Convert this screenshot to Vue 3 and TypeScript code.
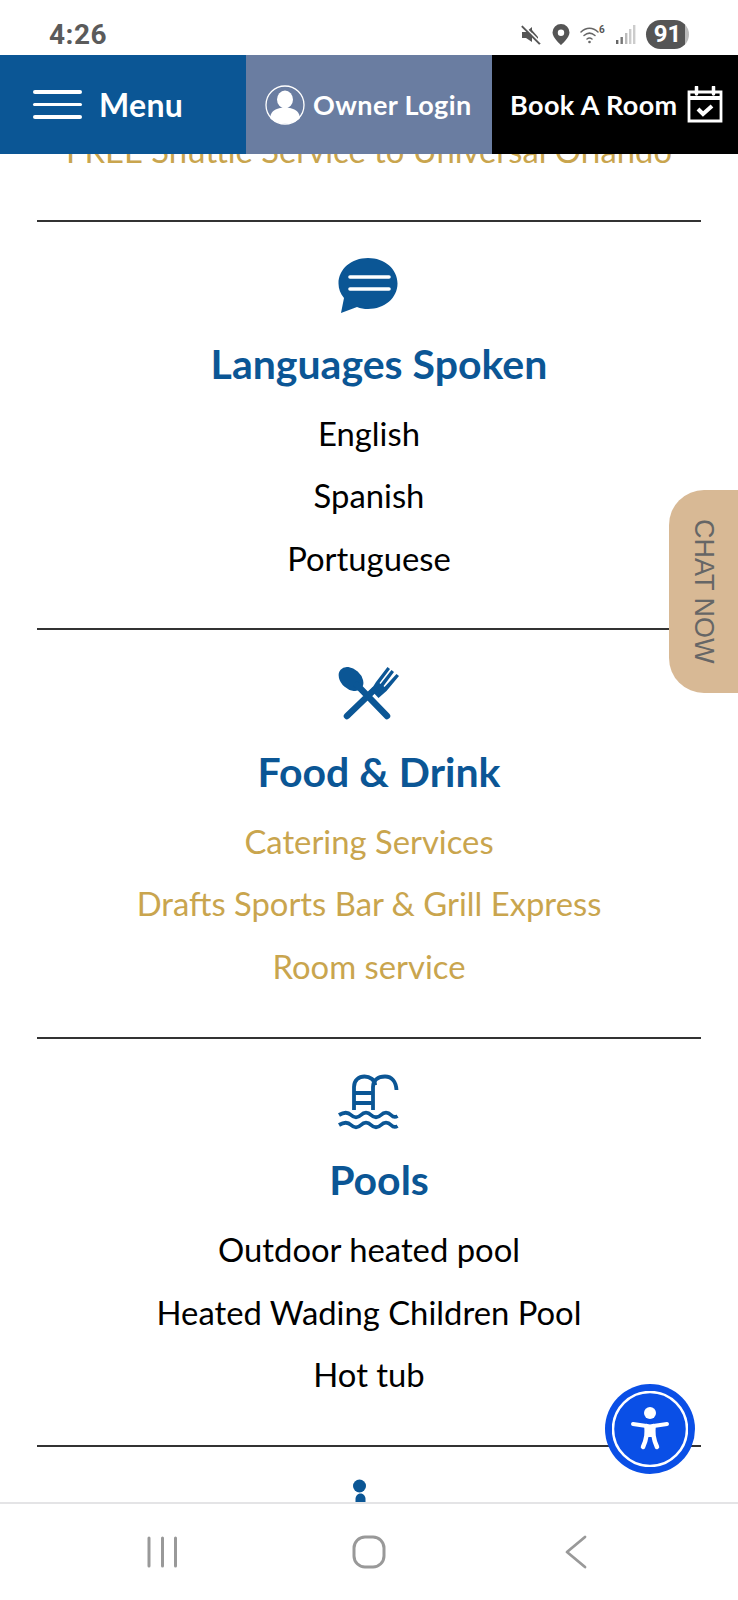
<script setup lang="ts">
interface Amenity {
  key: string
  title: string
  link: boolean
  items: string[]
}
const amenities: Amenity[] = [
  { key: 'lang', title: 'Languages Spoken', link: false, items: ['English', 'Spanish', 'Portuguese'] },
  { key: 'food', title: 'Food & Drink', link: true, items: ['Catering Services', 'Drafts Sports Bar & Grill Express', 'Room service'] },
  { key: 'pool', title: 'Pools', link: false, items: ['Outdoor heated pool', 'Heated Wading Children Pool', 'Hot tub'] },
]
</script>

<template>
  <div class="phone">
    <header class="status">
      <span class="time">4:26</span>
      <div class="status-icons">
        <svg class="s-mute" width="22" height="20" viewBox="0 0 22 20">
          <path d="M2 7h4l6-5v15l-6-4H2z" fill="#555" />
          <path d="M12 5l6 7v2l-6-6z" fill="#555" />
          <path d="M2 1l18 18" stroke="#555" stroke-width="2.4" />
          <path d="M3 0l18 18" stroke="#fff" stroke-width="1.2" />
        </svg>
        <svg width="18" height="21" viewBox="0 0 18 21">
          <path fill-rule="evenodd" d="M9 0a8.500 8.500 0 0 1 8.500 8.500C17.500 14 9 21 9 21S.5 14 .5 8.500A8.500 8.500 0 0 1 9 0zm0 5.500a3.200 3.200 0 1 0 0 6.400 3.200 3.200 0 0 0 0-6.400z" fill="#555" />
        </svg>
        <svg width="26" height="20" viewBox="0 0 26 20" fill="none" stroke="#666" stroke-width="1.500" stroke-linecap="round">
          <path d="M1 7c5-5 12-5 17 0" />
          <path d="M4 10.500c3.500-3 7.500-3 11 0" />
          <path d="M7 14c2-1.500 3-1.500 5 0" />
          <circle cx="9.500" cy="17" r="1.300" fill="#666" stroke="none" />
          <text x="19" y="7.500" font-size="10" font-weight="700" fill="#555" stroke="none" font-family="Roboto, sans-serif">6</text>
        </svg>
        <svg width="20" height="20" viewBox="0 0 20 20">
          <rect x="0" y="15" width="2.400" height="4" fill="#666" />
          <rect x="4.500" y="12" width="2.400" height="7" fill="#777" />
          <rect x="9" y="8" width="2.400" height="11" fill="#bbb" />
          <rect x="13" y="4" width="2.400" height="15" fill="#ccc" />
          <rect x="17" y="0" width="2.400" height="19" fill="#ccc" />
        </svg>
        <span class="battery">91</span>
      </div>
    </header>

    <nav class="topnav">
      <a class="tab tab-menu">
        <span class="burger"><i></i><i></i><i></i></span>
        <span class="menu-label">Menu</span>
      </a>
      <a class="tab tab-owner">
        <svg width="40" height="40" viewBox="0 0 40 40">
          <circle cx="20" cy="20" r="19" fill="none" stroke="#fff" stroke-width="1.300" />
          <ellipse cx="20" cy="14.500" rx="8" ry="9" fill="#fff" />
          <path d="M5 33c1-6 3-8 10-10h10c7 2 9 4 10 10-4 4-9 5.500-15 5.500S9 37 5 33z" fill="#fff" />
        </svg>
        <span>Owner Login</span>
      </a>
      <a class="tab tab-book">
        <span>Book A Room</span>
        <svg width="36" height="37" viewBox="0 0 36 37" fill="none" stroke="#fff">
          <path d="M2 6h32v29H2z" stroke-width="2.800" />
          <path d="M2 12h32" stroke-width="4" />
          <path d="M9.500 1v7M26.500 1v7" stroke-width="3.500" stroke-linecap="round" />
          <path d="M11 23l5 5 9-8" stroke-width="4" />
        </svg>
      </a>
    </nav>

    <main class="content">
      <div class="scrolled">
        <div class="lead">
          <p class="item gold">FREE Shuttle Service to Universal Orlando</p>
        </div>

        <section v-for="a in amenities" :key="a.key" class="amenity">
          <svg v-if="a.key === 'lang'" class="icon" viewBox="0 0 120 90">
            <path fill="#0b5695" d="M59 18c16.500 0 29.500 11 29.500 25.500S75.500 69 59 69c-4 0-7.500-.5-11-2L32 73l3-15c-3.500-4-5.500-9-5.500-14.500C29.500 29 42.500 18 59 18z" />
            <path d="M41 37h39M41 49h39" stroke="#fff" stroke-width="3.600" stroke-linecap="round" />
          </svg>
          <svg v-else-if="a.key === 'food'" class="icon" viewBox="0 -1 120 90">
            <ellipse cx="42" cy="30" rx="14" ry="10" fill="#0b5695" transform="rotate(42 42 30)" />
            <path d="M48 36l30 31M38 67l27-26" stroke="#0b5695" stroke-width="6.500" stroke-linecap="round" fill="none" />
            <path d="M62 41l5-8 11.500-15 2.500 2-10.500 14 1 1 11-14 2.500 2-10.500 14 1 1 12-13 2.500 2-12.500 15-8 7z" fill="#0b5695" />
          </svg>
          <svg v-else-if="a.key === 'pool'" class="icon" viewBox="0 -3 120 90" fill="none" stroke="#0b5695" stroke-width="3.800">
            <path d="M45 50V27c0-7 5-10.500 10.500-10.500S66 20 66 25" />
            <path d="M64 50V27c0-7 5-10.500 12-10.500S87 22 87.500 30" />
            <path d="M45 33h19M45 43h19" />
            <path d="M30 55c5-3 9-3 12 0s7 3 10 0 7-3 10 0 7 3 10 0 7-3 10 0 5 2 6.500 1" />
            <path d="M30 65c5-3 9-3 12 0s7 3 10 0 7-3 10 0 7 3 10 0 7-3 10 0 5 2 6.500 1" />
          </svg>
          <h2 class="title">{{ a.title }}</h2>
          <ul class="list">
            <li v-for="it in a.items" :key="it" class="item" :class="{ gold: a.link }">{{ it }}</li>
          </ul>
        </section>

        <section class="amenity">
          <svg class="icon" viewBox="0 0 120 90">
            <circle cx="50.500" cy="21" r="6.500" fill="#0b5695" />
            <path d="M46.500 38v-4c0-3 2-5.500 5-5.500s5 2.500 5 5.500v4z" fill="#0b5695" />
          </svg>
        </section>
      </div>

      <button class="chat">CHAT NOW</button>
      <button class="a11y" aria-label="Accessibility">
        <svg width="76" height="76" viewBox="0 0 76 76">
          <circle cx="38" cy="38" r="37" fill="none" stroke="#fff" stroke-width="2.500" />
          <circle cx="38" cy="22" r="6" fill="#fff" />
          <path d="M21 33l17 2.500L55 33" fill="none" stroke="#fff" stroke-width="4" stroke-linecap="round" stroke-linejoin="round" />
          <path d="M34.500 35c.5 7 .5 12-3.500 21M41.500 35c-.5 7-.5 12 3.500 21" fill="none" stroke="#fff" stroke-width="4.500" stroke-linecap="round" />
          <path d="M34 36h8v10h-8z" fill="#fff" />
        </svg>
      </button>
    </main>

    <footer class="sysnav">
      <svg width="33" height="32" viewBox="0 0 33 32" stroke="#999" stroke-width="3" stroke-linecap="round">
        <path d="M3 2v28M16.500 2v28M29.500 2v28" />
      </svg>
      <svg class="home" width="34" height="34" viewBox="0 0 34 34" fill="none" stroke="#999" stroke-width="3">
        <rect x="2" y="2" width="30" height="30" rx="11" />
      </svg>
      <svg class="back" width="22" height="34" viewBox="0 0 22 34" fill="none" stroke="#999" stroke-width="2.800" stroke-linecap="round" stroke-linejoin="round">
        <path d="M20 2L2 17l18 15" />
      </svg>
    </footer>
  </div>
</template>

<style>
html,
body {
  margin: 0;
  background: #fff;
}
</style>

<style scoped>
.phone {
  width: 738px;
  height: 1600px;
  display: flex;
  flex-direction: column;
  overflow: hidden;
  background: #fff;
  font-family: Lato, sans-serif;
}

.status {
  height: 55px;
  flex: none;
  display: flex;
  align-items: center;
  justify-content: space-between;
  padding: 14px 49px 0;
  box-sizing: border-box;
}
.time {
  font: 700 28px Roboto, sans-serif;
  color: #5b5b5b;
  letter-spacing: 0.5px;
}
.status-icons {
  display: flex;
  align-items: center;
  gap: 10px;
}
.battery {
  width: 43px;
  height: 29px;
  border-radius: 15px;
  background: linear-gradient(90deg, #555 90%, #bbb 90%);
  color: #fff;
  font: 700 24px/29px Roboto, sans-serif;
  text-align: center;
}

.topnav {
  height: 99px;
  flex: none;
  display: flex;
  position: relative;
  z-index: 2;
}
.tab {
  flex: 0 0 246px;
  min-width: 0;
  display: flex;
  align-items: center;
  color: #fff;
  font-weight: 700;
  font-size: 27px;
  letter-spacing: 0.4px;
  white-space: nowrap;
  box-sizing: border-box;
}
.tab-menu {
  background: #0b5695;
  padding-left: 33px;
  gap: 17px;
}
.burger {
  display: flex;
  flex-direction: column;
  gap: 9px;
  width: 49px;
}
.burger i {
  height: 3.5px;
  border-radius: 2px;
  background: #fff;
}
.menu-label {
  font-size: 32px;
  letter-spacing: 0.3px;
}
.tab-owner {
  background: #6a7da1;
  padding-left: 19px;
  gap: 8px;
}
.tab-book {
  background: #000;
  padding-left: 18px;
  gap: 9px;
}

.content {
  flex: 1;
  position: relative;
  overflow: hidden;
}
.scrolled {
  margin-top: -34.5px;
}
.lead {
  padding-bottom: 38px;
}
.amenity {
  margin: 0 37px;
  border-top: 2px solid #333;
  padding-bottom: 38.3px;
  display: flex;
  flex-direction: column;
  align-items: center;
}
.icon {
  width: 120px;
  height: 90px;
  margin-top: 18px;
  flex: none;
}
.title {
  margin: 10.5px 0 16px;
  padding-left: 20px;
  font-size: 41px;
  line-height: 46px;
  font-weight: 700;
  color: #0b5695;
}
.list {
  list-style: none;
  margin: 0;
  padding: 0;
  width: 100%;
}
.item {
  margin: 0;
  text-align: center;
  font-size: 32.8px;
  line-height: 62.5px;
  color: #000;
}
.gold {
  color: #c9a54e;
}

.chat {
  position: absolute;
  right: 0;
  top: 336px;
  width: 69px;
  height: 203px;
  border: 0;
  padding: 0;
  border-radius: 35px 0 0 35px;
  background: #d8b995;
  color: #666;
  writing-mode: vertical-rl;
  font: 400 27px "Liberation Sans", sans-serif;
  display: flex;
  align-items: center;
  justify-content: center;
}
.a11y {
  position: absolute;
  left: 605px;
  top: 1230px;
  width: 90px;
  height: 90px;
  padding: 0;
  border: 0;
  border-radius: 50%;
  background: #0a4fe6;
  display: flex;
  align-items: center;
  justify-content: center;
}

.sysnav {
  height: 98px;
  flex: none;
  box-sizing: border-box;
  border-top: 2px solid #e4e4e6;
  background: #fff;
  position: relative;
  z-index: 2;
  display: flex;
  align-items: center;
  padding: 0 0 0 146px;
}
.home {
  margin-left: 173px;
}
.back {
  margin-left: 179px;
}
</style>
